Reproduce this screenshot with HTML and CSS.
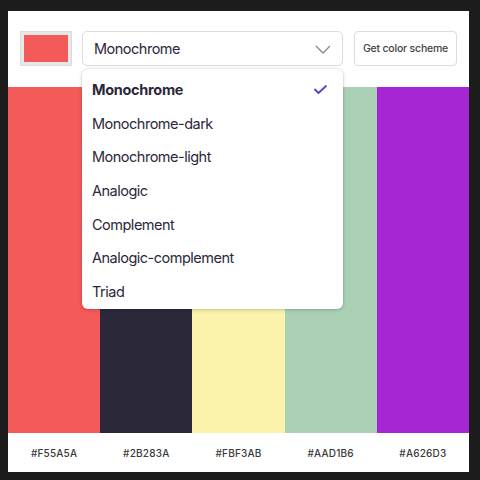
FILE: index.html
```html
<!DOCTYPE html>
<html>
<head>
<meta charset="utf-8">
<link rel="stylesheet" href="styles.css">
</head>
<body>
<div class="panel">
  <div class="header">
    <div class="swatch"><div class="swatch-fill"></div></div>
    <div class="select-wrap">
      <div class="select">
        <span>Monochrome</span>
        <svg class="chev" width="16" height="9" viewBox="0 0 16 9"><path d="M1 1l7 7 7-7" fill="none" stroke="#8a8a8a" stroke-width="1.4"/></svg>
      </div>
      <ul class="menu">
        <li class="item selected"><span>Monochrome</span><svg width="13" height="9" viewBox="0 0 13 9"><path d="M1 4.5l3.5 3.5L12 1" fill="none" stroke="#5b42c4" stroke-width="1.8" stroke-linecap="round" stroke-linejoin="round"/></svg></li>
        <li class="item">Monochrome-dark</li>
        <li class="item">Monochrome-light</li>
        <li class="item">Analogic</li>
        <li class="item">Complement</li>
        <li class="item">Analogic-complement</li>
        <li class="item">Triad</li>
      </ul>
    </div>
    <button class="btn">Get color scheme</button>
  </div>
  <div class="colors">
    <div class="col" style="background:#F55A5A"></div>
    <div class="col" style="background:#2B283A"></div>
    <div class="col" style="background:#FBF3AB"></div>
    <div class="col" style="background:#AAD1B6"></div>
    <div class="col" style="background:#A626D3"></div>
  </div>
  <div class="labels">
    <div>#F55A5A</div>
    <div>#2B283A</div>
    <div>#FBF3AB</div>
    <div>#AAD1B6</div>
    <div>#A626D3</div>
  </div>
</div>
</body>
</html>
```
FILE: styles.css
```css
html, body { margin: 0; padding: 0; }
body {
  background: #1c1c1c;
  width: 480px;
  height: 480px;
  font-family: Inter, "Noto Sans", sans-serif;
  overflow: hidden;
}
.panel {
  margin: 11px 0 0 8px;
  width: 461px;
  height: 461px;
  background: #fff;
  display: flex;
  flex-direction: column;
}
.header {
  height: 76px;
  box-sizing: border-box;
  padding: 20px 12px 0 12px;
  display: flex;
  align-items: flex-start;
}
.swatch {
  width: 52px;
  height: 35px;
  box-sizing: border-box;
  background: #e8e8e8;
  border: 1px solid #dadada;
  padding: 3px;
}
.swatch-fill { width: 100%; height: 100%; background: #F55A5A; }
.select-wrap {
  position: relative;
  margin-left: 10px;
  width: 261px;
}
.select {
  height: 35px;
  box-sizing: border-box;
  border: 1px solid #dcdcdc;
  border-radius: 5px;
  display: flex;
  align-items: center;
  justify-content: space-between;
  padding: 0 11px 0 11px;
  font-size: 14.5px;
  letter-spacing: -0.5px;
  color: #2b283a;
}
.chev { margin-top: 1px; }
.menu {
  position: absolute;
  left: 0;
  top: 38px;
  width: 261px;
  margin: 0;
  padding: 4px 0 0 0;
  list-style: none;
  background: #fff;
  border-radius: 6px;
  box-shadow: 0 1px 4px rgba(0,0,0,0.18), 0 0 0 1px rgba(0,0,0,0.04);
  height: 240px;
  box-sizing: border-box;
  z-index: 2;
}
.item {
  height: 33.6px;
  display: flex;
  align-items: center;
  justify-content: space-between;
  padding: 0 16px 0 10px;
  font-size: 14.5px;
  letter-spacing: -0.5px;
  color: #2b283a;
}
.item.selected { font-weight: 700; letter-spacing: -0.3px; }
.btn {
  margin-left: 11px;
  width: 103px;
  height: 35px;
  box-sizing: border-box;
  border: 1px solid #dcdcdc;
  border-radius: 4px;
  background: #fff;
  font-family: Inter, "Noto Sans", sans-serif;
  font-size: 10.5px;
  letter-spacing: -0.2px;
  font-weight: 500;
  color: #444;
  padding: 0;
}
.colors {
  height: 346px;
  display: grid;
  grid-template-columns: repeat(5, 1fr);
}
.labels {
  flex: 1;
  display: grid;
  grid-template-columns: repeat(5, 1fr);
  align-items: center;
  text-align: center;
  font-size: 10px;
  font-weight: 500;
  color: #3a3a3a;
  letter-spacing: 0.2px;
}
```
